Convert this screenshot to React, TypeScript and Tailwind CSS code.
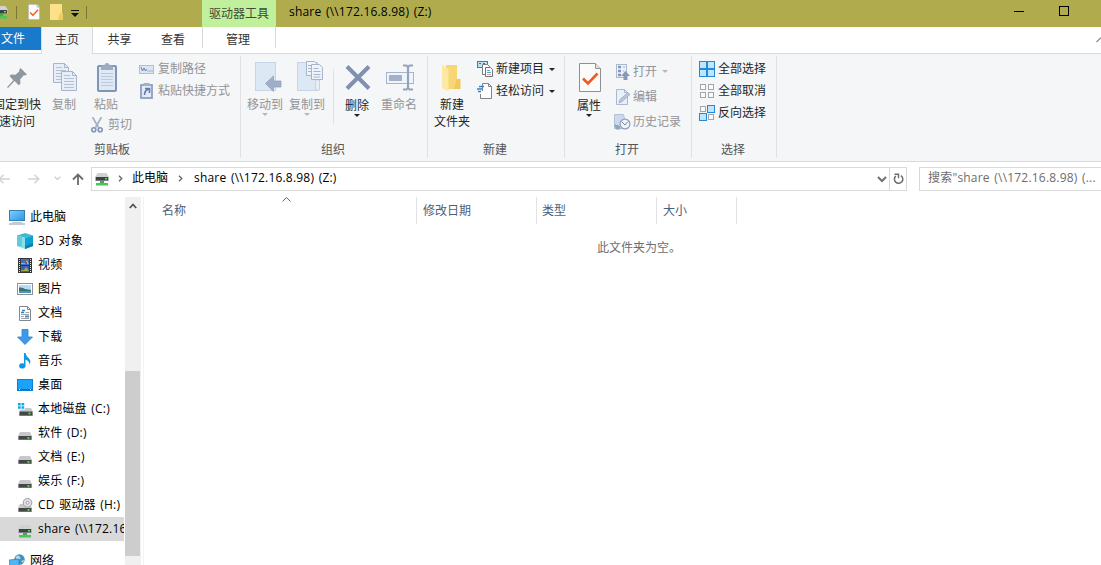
import type { ReactNode } from "react";

type Kids = { children?: ReactNode };

function Svg({ w, h, children }: { w: number; h: number } & Kids) {
  return (
    <svg width={w} height={h} viewBox={`0 0 ${w} ${h}`} fill="none" className="block shrink-0">
      {children}
    </svg>
  );
}

/* ---------- shared icons ---------- */

function Caret({ color = "#222" }: { color?: string }) {
  return (
    <Svg w={6} h={3}>
      <path d="M0 0h6L3 3z" fill={color} />
    </Svg>
  );
}

function NetDrive() {
  return (
    <Svg w={14} h={14}>
      <path d="M2.500 1h9L14 5H0z" fill="#cfd1d3" />
      <rect x="0" y="5" width="14" height="4" fill="#b4b6b8" />
      <rect x="1" y="5" width="12" height="3.500" fill="#3f4143" />
      <rect x="10" y="6" width="2" height="1.500" fill="#52e052" />
      <rect x="5" y="9" width="4" height="2" fill="#37b24a" />
      <rect x="1" y="11" width="12" height="2.500" fill="#4cc45a" />
    </Svg>
  );
}

function Drive() {
  return (
    <Svg w={14} h={8}>
      <path d="M2 0h10l2 4H0z" fill="#c6c8ca" />
      <rect x="0" y="4" width="14" height="4" fill="#a9abad" />
      <rect x=".7" y="4" width="12.600" height="3.600" fill="#444648" />
      <rect x="9.5" y="5" width="2" height="1.8" fill="#4be04b" />
    </Svg>
  );
}

function CheckDoc({ w, h }: { w: number; h: number }) {
  return (
    <svg width={w} height={h} viewBox="0 0 22 29" fill="none" className="block shrink-0" preserveAspectRatio="none">
      <path d="M.5.5h16l5 5v23H.5z" fill="#fbfbfc" stroke="#8e9093" />
      <path d="M16.500.5v5h5" fill="#e4e5e6" stroke="#8e9093" />
      <path d="M4 15.5l5 5L18.500 10.500" stroke="#f0591c" strokeWidth="2.6" />
    </svg>
  );
}

/* ---------- ribbon icons ---------- */

const PinIcon = () => (
  <Svg w={22} h={22}>
    <path d="M14.5 1l6.5 6.5-2.2 1-1-.3-3.6 4 .2 4.5-1.6 1.5-4.3-4.2L2 21l-1-.8 6.3-7L3.500 9 5 7.500l4.400.3 4-3.600-.2-1.200z" fill="#8d979f" />
  </Svg>
);

const Page = ({ x, y }: { x: number; y: number }) => (
  <g transform={`translate(${x} ${y})`}>
    <path d="M.5.5h11l4 4v15H.5z" fill="#e7eef8" stroke="#a5b5cd" />
    <path d="M11.500.5v4h4" stroke="#a5b5cd" />
    <path d="M3 4.500h6M3 7.500h10M3 10.500h10M3 13.500h10M3 16.500h10" stroke="#b3c1d7" />
  </g>
);

const CopyIcon = () => (
  <Svg w={24} h={28}>
    <Page x={0} y={0} />
    <Page x={8} y={8} />
  </Svg>
);

const PasteIcon = () => (
  <Svg w={20} h={29}>
    <rect x="1" y="3" width="18" height="25" rx="1" fill="#dfe9f6" stroke="#8094b8" strokeWidth="2" />
    <path d="M4 2.500h3.500a2.500 2.500 0 015 0H16V7H4z" fill="#9fabc0" />
    <path d="M4 10.500h12M4 13.500h12M4 16.500h12M4 19.500h12M4 22.500h12" stroke="#bccae0" />
  </Svg>
);

const CutIcon = () => (
  <Svg w={12} h={16}>
    <path d="M1.500 0l6 10.500M10.500 0l-6 10.500" stroke="#a3b1c8" strokeWidth="1.700" />
    <circle cx="2.800" cy="12.800" r="2" stroke="#8094b5" strokeWidth="1.600" />
    <circle cx="9.200" cy="12.800" r="2" stroke="#8094b5" strokeWidth="1.600" />
  </Svg>
);

const PathIcon = () => (
  <Svg w={15} h={9}>
    <rect x=".5" y=".5" width="14" height="8" fill="#dbe5f3" stroke="#b1bfd5" />
    <path d="M2 2l1.500 4L5 3l1.500 3L7.500 4" stroke="#6d82a8" />
    <path d="M8.500 6h1M10.500 6h1M12.500 6h1" stroke="#6d82a8" />
  </Svg>
);

const ShortcutIcon = () => (
  <Svg w={13} h={16}>
    <rect x="1" y="2" width="11" height="13" fill="#e2ebf7" stroke="#8d9fbf" strokeWidth="1.800" />
    <rect x="3.500" y="0" width="6" height="3" fill="#a3b1c8" />
    <path d="M5 5.500h4.500V10M9 6Q4.500 7 4.500 12" stroke="#5f7aa9" strokeWidth="1.600" />
  </Svg>
);

const MoveIcon = () => (
  <Svg w={27} h={30}>
    <rect x=".5" y=".5" width="20" height="28" fill="#dde8f5" stroke="#c6d4e7" />
    <path d="M18.500 18v10.500" stroke="#edf3fa" strokeWidth="2" />
    <path d="M10.500 21.500l8-7.500v5H26v6h-7.500v4.500z" fill="#a0aec9" stroke="#8d9dbb" strokeWidth=".7" />
  </Svg>
);

const CopyToIcon = () => (
  <Svg w={27} h={30}>
    <rect x=".5" y="1.500" width="20" height="28" fill="#dde8f5" stroke="#c6d4e7" />
    <path d="M18.500 19h4v10h-4z" fill="#e9eff7" stroke="#c6d4e7" />
    <path d="M9.500.5h8l3 3v11h-11z" fill="#eff4fb" stroke="#a5b5cd" />
    <path d="M11 4.500h4M11 7.500h4M11 10.500h4" stroke="#a5b5cd" />
    <path d="M14.500 3.500h8l3 3v12h-11z" fill="#eff4fb" stroke="#a5b5cd" />
    <path d="M16.500 7.500h5M16.500 10.500h7M16.500 13.500h7M16.500 16h7" stroke="#a5b5cd" />
  </Svg>
);

const DeleteIcon = () => (
  <Svg w={26} h={27}>
    <path d="M2 2.500l22 22M24 2.500l-22 22" stroke="#8190b0" strokeWidth="4" />
  </Svg>
);

const RenameIcon = () => (
  <Svg w={28} h={27}>
    <rect x=".5" y="8.500" width="27" height="11" fill="#f0f5fb" stroke="#a5b5cf" />
    <rect x="3" y="11" width="13" height="6" fill="#a3b1ca" />
    <path d="M17 1.500h3.500l1.500 1.500 1.500-1.500H27M22 2.500v22M17 25.500h3.500l1.500-1.500 1.500 1.500H27" stroke="#95a4be" strokeWidth="2.200" />
  </Svg>
);

const FolderIcon = () => (
  <Svg w={19} h={28}>
    <path d="M4 1h11v14l3 2v8H4z" fill="#f7d774" />
    <path d="M15 15h3.500v10H12z" fill="#efc75a" />
    <path d="M0 .5l6.500 5V27.500L0 24z" fill="#fde9a3" />
  </Svg>
);

const NewItemIcon = () => (
  <Svg w={16} h={16}>
    <rect x=".5" y=".5" width="10" height="6" fill="#bde3f5" stroke="#59758a" />
    <path d="M2 2.500h2M6 2.500h2" stroke="#4c6c82" />
    <path d="M5.500 3.500h5l2 2v8h-7z" fill="#fff" stroke="#777d83" />
    <path d="M8.500 6.500h5l2 2v7h-7z" fill="#fff" stroke="#6e747a" />
    <path d="M10 9.500h3M10 11.500h4" stroke="#4ba7dc" />
    <path d="M10 13.500h4" stroke="#e49a75" />
  </Svg>
);

const EasyAccessIcon = () => (
  <Svg w={15} h={16}>
    <path d="M5.500 8V.5h6l3 3v12h-11V11" fill="#fff" stroke="#808489" />
    <path d="M11.500.5v3h3" stroke="#808489" />
    <path d="M2 3.500h5M0 6h5M1 8.500h3" stroke="#2e86d2" strokeWidth="1.300" />
  </Svg>
);

const OpenIcon = () => (
  <Svg w={14} h={16}>
    <rect x=".5" y=".5" width="10" height="13" fill="#edf3fa" stroke="#acb9cd" />
    <path d="M2 3h3M2 7h3M2 11h3" stroke="#8396ba" strokeWidth="2.400" />
    <path d="M6.500 3h3M6.500 7h2" stroke="#acb9cd" />
    <path d="M9.500 7l4.500 5h-2.500v4h-4v-4H5z" fill="#8798b9" />
  </Svg>
);

const EditIcon = () => (
  <Svg w={14} h={16}>
    <path d="M.5.5h8l3 3v12H.5z" fill="#e9f0f9" stroke="#acb9cd" />
    <path d="M8.500.5v3h3" stroke="#acb9cd" />
    <path d="M3 14l1-3.500 8-7 2 2-8 7z" fill="#b9c7dd" stroke="#93a4c2" strokeWidth=".7" />
  </Svg>
);

const HistoryIcon = () => (
  <Svg w={17} h={16}>
    <path d="M.5.5h9l1 4v10H.5z" fill="#cddaec" stroke="#b3c2d8" />
    <path d="M0 10l6 2v3.500H2z" fill="#8fa4c4" />
    <circle cx="11" cy="10" r="4.900" fill="#f0f4f9" stroke="#8f9fb9" strokeWidth="1.200" />
    <path d="M8 8l3 3 3-3.500" stroke="#798baa" />
  </Svg>
);

const Cell = ({ x, y, on }: { x: number; y: number; on: boolean }) =>
  on ? (
    <rect x={x + 0.5} y={y + 0.5} width="7" height="7" fill="#bfe6fb" stroke="#2289dc" />
  ) : (
    <rect x={x + 1.5} y={y + 1.5} width="5" height="5" fill="#fbfbfb" stroke="#a3a5a8" />
  );

const GridIcon = ({ on }: { on: boolean[] }) => (
  <Svg w={16} h={16}>
    <Cell x={0} y={0} on={on[0]} />
    <Cell x={8} y={0} on={on[1]} />
    <Cell x={0} y={8} on={on[2]} />
    <Cell x={8} y={8} on={on[3]} />
  </Svg>
);

/* ---------- navigation icons ---------- */

const PcIcon = () => (
  <Svg w={16} h={15}>
    <defs>
      <linearGradient id="scr" x1="0" y1="0" x2="1" y2="1">
        <stop offset="0" stopColor="#80d0fb" />
        <stop offset="1" stopColor="#2497ec" />
      </linearGradient>
    </defs>
    <rect x=".5" y=".5" width="15" height="10" fill="url(#scr)" stroke="#3b7dab" />
    <path d="M3 12.500h10" stroke="#b7cad8" />
    <path d="M0 14h16" stroke="#8399ab" />
  </Svg>
);

const CubeIcon = () => (
  <Svg w={16} h={16}>
    <path d="M8 0l8 2.500L8 5 0 2.500z" fill="#3fb9cf" />
    <path d="M0 2.500L8 5v11l-8-3z" fill="#8ce0ea" />
    <path d="M0 2.500L5 4v9.500L0 13z" fill="#5fcbdb" />
    <path d="M16 2.500L8 5v11l8-3z" fill="#0d9fd6" />
    <path d="M8 13l8-3v3l-8 3z" fill="#0b83ad" />
  </Svg>
);

const VideoIcon = () => (
  <Svg w={14} h={15}>
    <rect width="14" height="15" fill="#343536" />
    <path d="M1.500 1v14M12.500 1v14" stroke="#e9e9e9" strokeDasharray="1 1" />
    <rect x="3" y="1" width="8" height="6" fill="#3a72c0" />
    <rect x="3" y="8" width="8" height="6" fill="#3465a8" />
    <path d="M3 5h4l2-3 2 4H3z" fill="#dca630" />
    <path d="M3 12h3l2-3 3 4H3z" fill="#a9a84c" />
    <rect x="7" y="4" width="2" height="2" fill="#c7442f" />
  </Svg>
);

const PictureIcon = () => (
  <Svg w={16} h={12}>
    <rect x=".5" y=".5" width="15" height="11" fill="#fff" stroke="#8f9295" />
    <rect x="2" y="2" width="12" height="8" fill="#b4dcf4" />
    <path d="M2 4.500q4-.5 6 1.500l6 1v2H2z" fill="#3d7268" />
    <path d="M2 8h12v2H2z" fill="#4d94cc" />
  </Svg>
);

const DocIcon = () => (
  <Svg w={12} h={15}>
    <path d="M.5.5h8l3 3v11H.5z" fill="#fff" stroke="#85888b" />
    <path d="M8.500.5v3h3" stroke="#85888b" />
    <path d="M3 4.500h3M2 6.500h3" stroke="#2c86c9" strokeWidth="1.300" />
    <path d="M6.500 6.500H10M2 8.500h8M2 10.500h3M2 12.500h8" stroke="#9da3a8" />
    <rect x="6" y="9.500" width="4" height="2" fill="#438fc8" />
  </Svg>
);

const DownIcon = () => (
  <Svg w={16} h={16}>
    <path d="M5 .5h6V8h4.500L8 15.500.5 8H5z" fill="#3d9ae8" stroke="#2a80cf" strokeWidth=".8" />
  </Svg>
);

const MusicIcon = () => (
  <Svg w={12} h={16}>
    <path d="M5 0h1.500Q7 3.500 10 5.500q2.500 2.500.5 6Q10.500 8 6.500 6.500V13A3.200 2.700 0 11 5 10.600z" fill="#0f96ea" />
  </Svg>
);

const DesktopIcon = () => (
  <Svg w={16} h={12}>
    <rect x=".5" y=".5" width="15" height="11" fill="#1ba3fa" stroke="#147fc9" />
    <path d="M1 10.500h14" stroke="#0b6fb5" />
    <path d="M2 10.500h1M13 10.500h1" stroke="#e8f5ff" />
  </Svg>
);

const SysDriveIcon = () => (
  <Svg w={15} h={13}>
    <path d="M0 0h2.700v2.500H0zM3.500 0h2.700v2.500H3.500zM0 3.300h2.700v2.500H0zM3.500 3.300h2.700v2.500H3.500z" fill="#13a8e8" />
    <path d="M7 5h6l2 3.500H1L2.500 6.500H7z" fill="#c6c8ca" />
    <rect x="1" y="8.500" width="14" height="4.500" fill="#a9abad" />
    <rect x="1.700" y="8.500" width="12.600" height="4" fill="#444648" />
    <rect x="10.500" y="9.500" width="2" height="1.800" fill="#4be04b" />
  </Svg>
);

const CdIcon = () => (
  <Svg w={15} h={14}>
    <path d="M2 6h10l2 4H0z" fill="#c6c8ca" />
    <circle cx="9.500" cy="4.800" r="4.300" fill="#e2e3e5" stroke="#97999c" />
    <circle cx="9.500" cy="4.800" r="1.500" fill="#fff" stroke="#97999c" />
    <rect x="0" y="10" width="14" height="4" fill="#a9abad" />
    <rect x=".7" y="10" width="12.600" height="3.600" fill="#444648" />
    <rect x="9.500" y="11" width="2" height="1.800" fill="#4be04b" />
  </Svg>
);

const NetworkIcon = () => (
  <Svg w={16} h={15}>
    <circle cx="10.500" cy="5.500" r="5.200" fill="#4391c0" />
    <path d="M8 1.500q3 0 3.500 3L9 6 6.500 4zM12 7l3-1-1 3z" fill="#b8dcea" />
    <path d="M0 6l10-1v8L0 12z" fill="#4fb8f4" stroke="#287db5" strokeWidth=".7" />
    <path d="M3 14h6" stroke="#6e93ad" />
  </Svg>
);

/* ---------- ribbon parts ---------- */

function Group({ width, label, shift, children }: { width: string; label: string; shift: string } & Kids) {
  return (
    <section className={`flex shrink-0 flex-col ${width}`}>
      <div className="flex h-[88px] pt-[6px]">{children}</div>
      <div className={`h-4 text-center leading-4 text-[#555] ${shift}`}>{label}</div>
    </section>
  );
}

const Divider = () => <div className="mt-[2px] h-[102px] w-px shrink-0 bg-[#dfe1e4]" />;

function Big({ icon, label, width = "w-[42px]", nudge = "", dim, low, arrow }: { icon: ReactNode; label: string[]; width?: string; nudge?: string; dim?: boolean; low?: boolean; arrow?: boolean }) {
  return (
    <div className={`flex shrink-0 flex-col items-center whitespace-nowrap ${width} ${dim ? "text-[#929497]" : "text-[#262626]"}`}>
      <div className={`flex items-center ${low ? "h-[37px] pb-[2px]" : "h-[36px]"} ${nudge}`}>{icon}</div>
      {label.map((l) => (
        <div key={l} className="h-[17px] leading-[17px]">{l}</div>
      ))}
      {arrow && <Caret color={dim ? "#b5b7ba" : "#222"} />}
    </div>
  );
}

function Small({ icon, label, dim, arrow, height = "h-[22px]", box = "w-[18px]" }: { icon: ReactNode; label: string; dim?: boolean; arrow?: boolean; height?: string; box?: string }) {
  return (
    <div className={`flex items-center whitespace-nowrap ${height} ${dim ? "text-[#929497]" : "text-[#262626]"}`}>
      <div className={`shrink-0 ${box}`}>{icon}</div>
      <span className="leading-4">{label}</span>
      {arrow && <span className="ml-[5px]"><Caret color={dim ? "#b5b7ba" : "#222"} /></span>}
    </div>
  );
}

function Ribbon() {
  return (
    <div className="flex h-[108px] shrink-0 border-b border-[#d9dadc] bg-[#f4f6f8]">
      <Group width="w-[240px]" label="剪贴板" shift="pr-4">
        <div className="-ml-[7px] flex">
          <Big icon={<PinIcon />} label={["固定到快", "速访问"]} width="w-12" />
          <Big icon={<CopyIcon />} label={["复制"]} width="w-[46px]" nudge="pl-[2px] pb-[2px]" dim />
          <div className="w-[46px]">
            <Big icon={<PasteIcon />} label={["粘贴"]} width="w-[38px]" nudge="pl-[2px] pb-[2px]" dim />
            <div className="mt-1 pl-1">
              <Small icon={<CutIcon />} label="剪切" height="h-4" box="w-[17px]" dim />
            </div>
          </div>
        </div>
        <div className="-mt-[2px] ml-[6px]">
          <Small icon={<PathIcon />} label="复制路径" box="w-[19px]" dim />
          <Small icon={<span className="block pl-px"><ShortcutIcon /></span>} label="粘贴快捷方式" box="w-[19px]" dim />
        </div>
      </Group>
      <Divider />
      <Group width="w-[186px]" label="组织" shift="pr-[2px]">
        <div className="w-[3px]" />
        <Big icon={<MoveIcon />} label={["移动到"]} nudge="pl-[6px] pb-[2px]" dim arrow />
        <Big icon={<CopyToIcon />} label={["复制到"]} nudge="pl-[6px] pb-[4px]" dim arrow />
        <div className="ml-[5px] mr-[2px] mt-[9px] h-[55px] w-px bg-[#dfe1e4]" />
        <Big icon={<DeleteIcon />} label={["删除"]} nudge="pl-[2px]" low arrow />
        <Big icon={<RenameIcon />} label={["重命名"]} nudge="pl-[2px] pb-[2px]" dim />
      </Group>
      <Divider />
      <Group width="w-[136px]" label="新建" shift="pr-[2px]">
        <div className="w-[3px]" />
        <Big icon={<FolderIcon />} label={["新建", "文件夹"]} nudge="pr-px" />
        <div className="-mt-[2px] ml-1">
          <Small icon={<NewItemIcon />} label="新建项目" box="w-[19px]" arrow />
          <Small icon={<EasyAccessIcon />} label="轻松访问" box="w-[19px]" arrow />
        </div>
      </Group>
      <Divider />
      <Group width="w-[126px]" label="打开" shift="pr-[2px]">
        <div className="w-[3px]" />
        <Big icon={<CheckDoc w={22} h={29} />} label={["属性"]} nudge="pl-[2px]" low arrow />
        <div className="-mt-px ml-[6px]">
          <Small icon={<OpenIcon />} label="打开" height="h-[25px]" box="w-[17px]" dim arrow />
          <Small icon={<EditIcon />} label="编辑" height="h-[25px]" box="w-[17px]" dim />
          <Small icon={<span className="-ml-[2px] block"><HistoryIcon /></span>} label="历史记录" height="h-[25px]" box="w-[17px]" dim />
        </div>
      </Group>
      <Divider />
      <Group width="w-[84px]" label="选择" shift="pr-[2px]">
        <div className="-mt-[2px] ml-[7px]">
          <Small icon={<GridIcon on={[true, true, true, true]} />} label="全部选择" box="w-[19px]" />
          <Small icon={<GridIcon on={[false, false, false, false]} />} label="全部取消" box="w-[19px]" />
          <Small icon={<GridIcon on={[false, true, true, false]} />} label="反向选择" box="w-[19px]" />
        </div>
      </Group>
      <Divider />
    </div>
  );
}

/* ---------- title and tabs ---------- */

function TitleBar() {
  return (
    <header className="flex h-[27px] shrink-0 bg-[#b0ab4d]">
      <div className="flex h-6 w-[202px] items-center">
        <div className="-ml-[6px]"><NetDrive /></div>
        <div className="ml-2 h-[13px] w-px bg-[#7b7633]" />
        <div className="ml-[11px]"><CheckDoc w={12} h={16} /></div>
        <div className="ml-[10px]">
          <Svg w={13} h={16}>
            <rect width="12" height="16" fill="#fce08a" />
            <path d="M10 9h3v7h-5z" fill="#f2cb5d" />
          </Svg>
        </div>
        <div className="ml-2 pt-[2px]">
          <Svg w={8} h={7}>
            <path d="M0 .5h8" stroke="#111" />
            <path d="M0 3h8L4 7z" fill="#111" />
          </Svg>
        </div>
        <div className="ml-[7px] h-[13px] w-px bg-[#7b7633]" />
      </div>
      <div className="w-[74px] bg-[#c0f09b] text-center leading-[27px] text-[#3f4a37]">驱动器工具</div>
      <div className="ml-[13px] flex-1 leading-6 tracking-[0.2px] text-black [word-spacing:1.2px]">share (\\172.16.8.98) (Z:)</div>
      <div className="flex w-[87px]">
        <div className="mt-[11px] h-px w-[10px] bg-black" />
        <div className="ml-[35px] mt-[6px] size-[10px] border border-black" />
      </div>
    </header>
  );
}

function Tabs() {
  return (
    <nav className="flex h-[27px] shrink-0 bg-white text-[#333]">
      <div className="w-[41px] border-b border-[#d9dadc]">
        <div className="h-[23px] bg-[#1979ca] leading-[23px] text-white"><span className="pl-px">文件</span></div>
      </div>
      <div className="w-[52px] border-x border-[#d9dadc] bg-[#f4f6f8] text-center leading-[26px]">主页</div>
      <div className="flex flex-1 border-b border-[#d9dadc] leading-[26px]">
        <div className="w-[53px] text-center">共享</div>
        <div className="w-[56px] pr-[2px] text-center">查看</div>
        <div className="h-[21px] w-[74px] border-x border-[#d5d7d9] pr-[2px] text-center">管理</div>
        <div className="flex flex-1 items-center justify-end overflow-hidden">
          <div className="-mr-1">
            <Svg w={9} h={6}><path d="M.5 5l4-4 4 4" stroke="#8a8c8e" strokeWidth="1.200" /></Svg>
          </div>
        </div>
      </div>
    </nav>
  );
}

const Chev = () => (
  <Svg w={5} h={7}><path d="M1 .7l2.800 2.800L1 6.300" stroke="#666" strokeWidth="1.300" /></Svg>
);

function AddressBar() {
  return (
    <div className="flex h-[30px] shrink-0 pt-[5px]">
      <div className="flex h-[23px] w-[91px] items-center">
        <div className="-ml-[2px]"><Svg w={12} h={10}><path d="M12 5H1M5.500.7L1.200 5l4.300 4.300" stroke="#d3d3d3" strokeWidth="1.500" /></Svg></div>
        <div className="ml-[18px]"><Svg w={12} h={10}><path d="M0 5h11M6.500.7L10.800 5 6.500 9.300" stroke="#d3d3d3" strokeWidth="1.500" /></Svg></div>
        <div className="ml-[14px]"><Svg w={7} h={5}><path d="M.7.7l2.800 2.800L6.300.7" stroke="#cfcfcf" strokeWidth="1.300" /></Svg></div>
        <div className="ml-[11px]"><Svg w={12} h={12}><path d="M6 12V1.500M1 6.500l5-5 5 5" stroke="#6b6b6b" strokeWidth="1.800" /></Svg></div>
      </div>
      <div className="flex h-[24px] w-[816px] items-center border border-[#d9d9d9] text-black">
        <div className="ml-[3px]"><NetDrive /></div>
        <div className="ml-[9px] pb-[2px]"><Chev /></div>
        <span className="ml-[9px] pb-[2px]">此电脑</span>
        <div className="ml-[10px] pb-[2px]"><Chev /></div>
        <span className="ml-[11px] flex-1 pb-[2px] tracking-[0.2px] [word-spacing:1.2px]">share (\\172.16.8.98) (Z:)</span>
        <Svg w={10} h={7}><path d="M1 1l4 4 4-4" stroke="#707070" strokeWidth="2" /></Svg>
        <div className="ml-[2px] flex h-full w-[17px] items-center justify-center border-l border-[#d9d9d9]">
          <Svg w={11} h={12}>
            <path d="M8 2.700A4.200 4.200 0 112.800 3" stroke="#6b6b6b" strokeWidth="1.500" />
            <path d="M1.500 1.300h4v4" stroke="#6b6b6b" strokeWidth="1.400" />
          </Svg>
        </div>
      </div>
      <div className="ml-3 flex h-[24px] flex-1 items-center justify-between overflow-hidden border border-r-0 border-[#d9d9d9] pl-[8px] text-[#6d6d6d]">
        <span className="whitespace-nowrap pb-[2px] tracking-[0.2px] [word-spacing:1.2px]">搜索"share (\\172.16.8.98) (...</span>
      </div>
    </div>
  );
}

/* ---------- body ---------- */

const items: { label: string; icon: ReactNode; pad?: string; selected?: boolean }[] = [
  { label: "3D 对象", icon: <CubeIcon /> },
  { label: "视频", icon: <VideoIcon /> },
  { label: "图片", icon: <PictureIcon /> },
  { label: "文档", icon: <DocIcon /> },
  { label: "下载", icon: <DownIcon /> },
  { label: "音乐", icon: <MusicIcon /> },
  { label: "桌面", icon: <DesktopIcon /> },
  { label: "本地磁盘 (C:)", icon: <SysDriveIcon /> },
  { label: "软件 (D:)", icon: <Drive />, pad: "pt-[5px]" },
  { label: "文档 (E:)", icon: <Drive />, pad: "pt-[5px]" },
  { label: "娱乐 (F:)", icon: <Drive />, pad: "pt-[5px]" },
  { label: "CD 驱动器 (H:)", icon: <CdIcon /> },
  { label: "share (\\\\172.16.8.98) (Z:)", icon: <NetDrive />, pad: "pt-[3px]", selected: true },
];

function Sidebar() {
  return (
    <aside className="w-[124px] shrink-0 overflow-hidden whitespace-nowrap pt-[13px] text-black">
      <div className="flex h-6 items-center pl-[9px]">
        <PcIcon />
        <span className="ml-[5px] pb-px">此电脑</span>
      </div>
      {items.map((it) => (
        <div key={it.label} className={`flex h-6 items-center pl-[17px] ${it.selected ? "bg-[#d9d9d9]" : ""}`}>
          <div className={`flex w-4 shrink-0 justify-center ${it.pad ?? ""}`}>{it.icon}</div>
          <span className="ml-[5px] pb-px tracking-[0.2px] [word-spacing:1.2px]">{it.label}</span>
        </div>
      ))}
      <div className="mt-2 flex h-6 items-center pl-[9px]">
        <NetworkIcon />
        <span className="ml-[5px] pb-px">网络</span>
      </div>
    </aside>
  );
}

function Body() {
  return (
    <div className="flex min-h-0 flex-1 overflow-hidden">
      <Sidebar />
      <div className="ml-px mt-[5px] flex w-[16px] shrink-0 flex-col items-center bg-[#f0f0f0]">
        <div className="mt-[6px]">
          <Svg w={8} h={6}><path d="M.8 5L4 1.500 7.200 5" stroke="#505050" strokeWidth="1.800" /></Svg>
        </div>
        <div className="mt-[162px] h-[185px] w-full shrink-0 border-r border-[#f0f0f0] bg-[#cdcdcd]" />
      </div>
      <main className="ml-[2px] mt-[5px] flex-1 border-l border-[#f3f3f3]">
        <div className="flex h-[27px] leading-[27px] text-[#4c607a]">
          <div className="flex w-[273px] border-r border-[#e2e2e2] pl-[18px]">
            <span className="w-[120px]">名称</span>
            <Svg w={9} h={5}><path d="M.5 4.500l4-4 4 4" stroke="#666" /></Svg>
          </div>
          <div className="w-[120px] border-r border-[#e2e2e2] pl-[6px]">修改日期</div>
          <div className="w-[120px] border-r border-[#e2e2e2] pl-[5px]">类型</div>
          <div className="w-[80px] border-r border-[#e2e2e2] pl-[6px]">大小</div>
        </div>
        <div className="mt-4 pl-[453px] leading-4 text-[#6d6d6d]">此文件夹为空。</div>
      </main>
    </div>
  );
}

export default function App() {
  return (
    <div className="flex h-[565px] w-[1101px] flex-col overflow-hidden bg-white font-['Open_Sans','Noto_Sans_CJK_SC',sans-serif] text-[12px] leading-4">
      <TitleBar />
      <Tabs />
      <Ribbon />
      <AddressBar />
      <Body />
    </div>
  );
}
